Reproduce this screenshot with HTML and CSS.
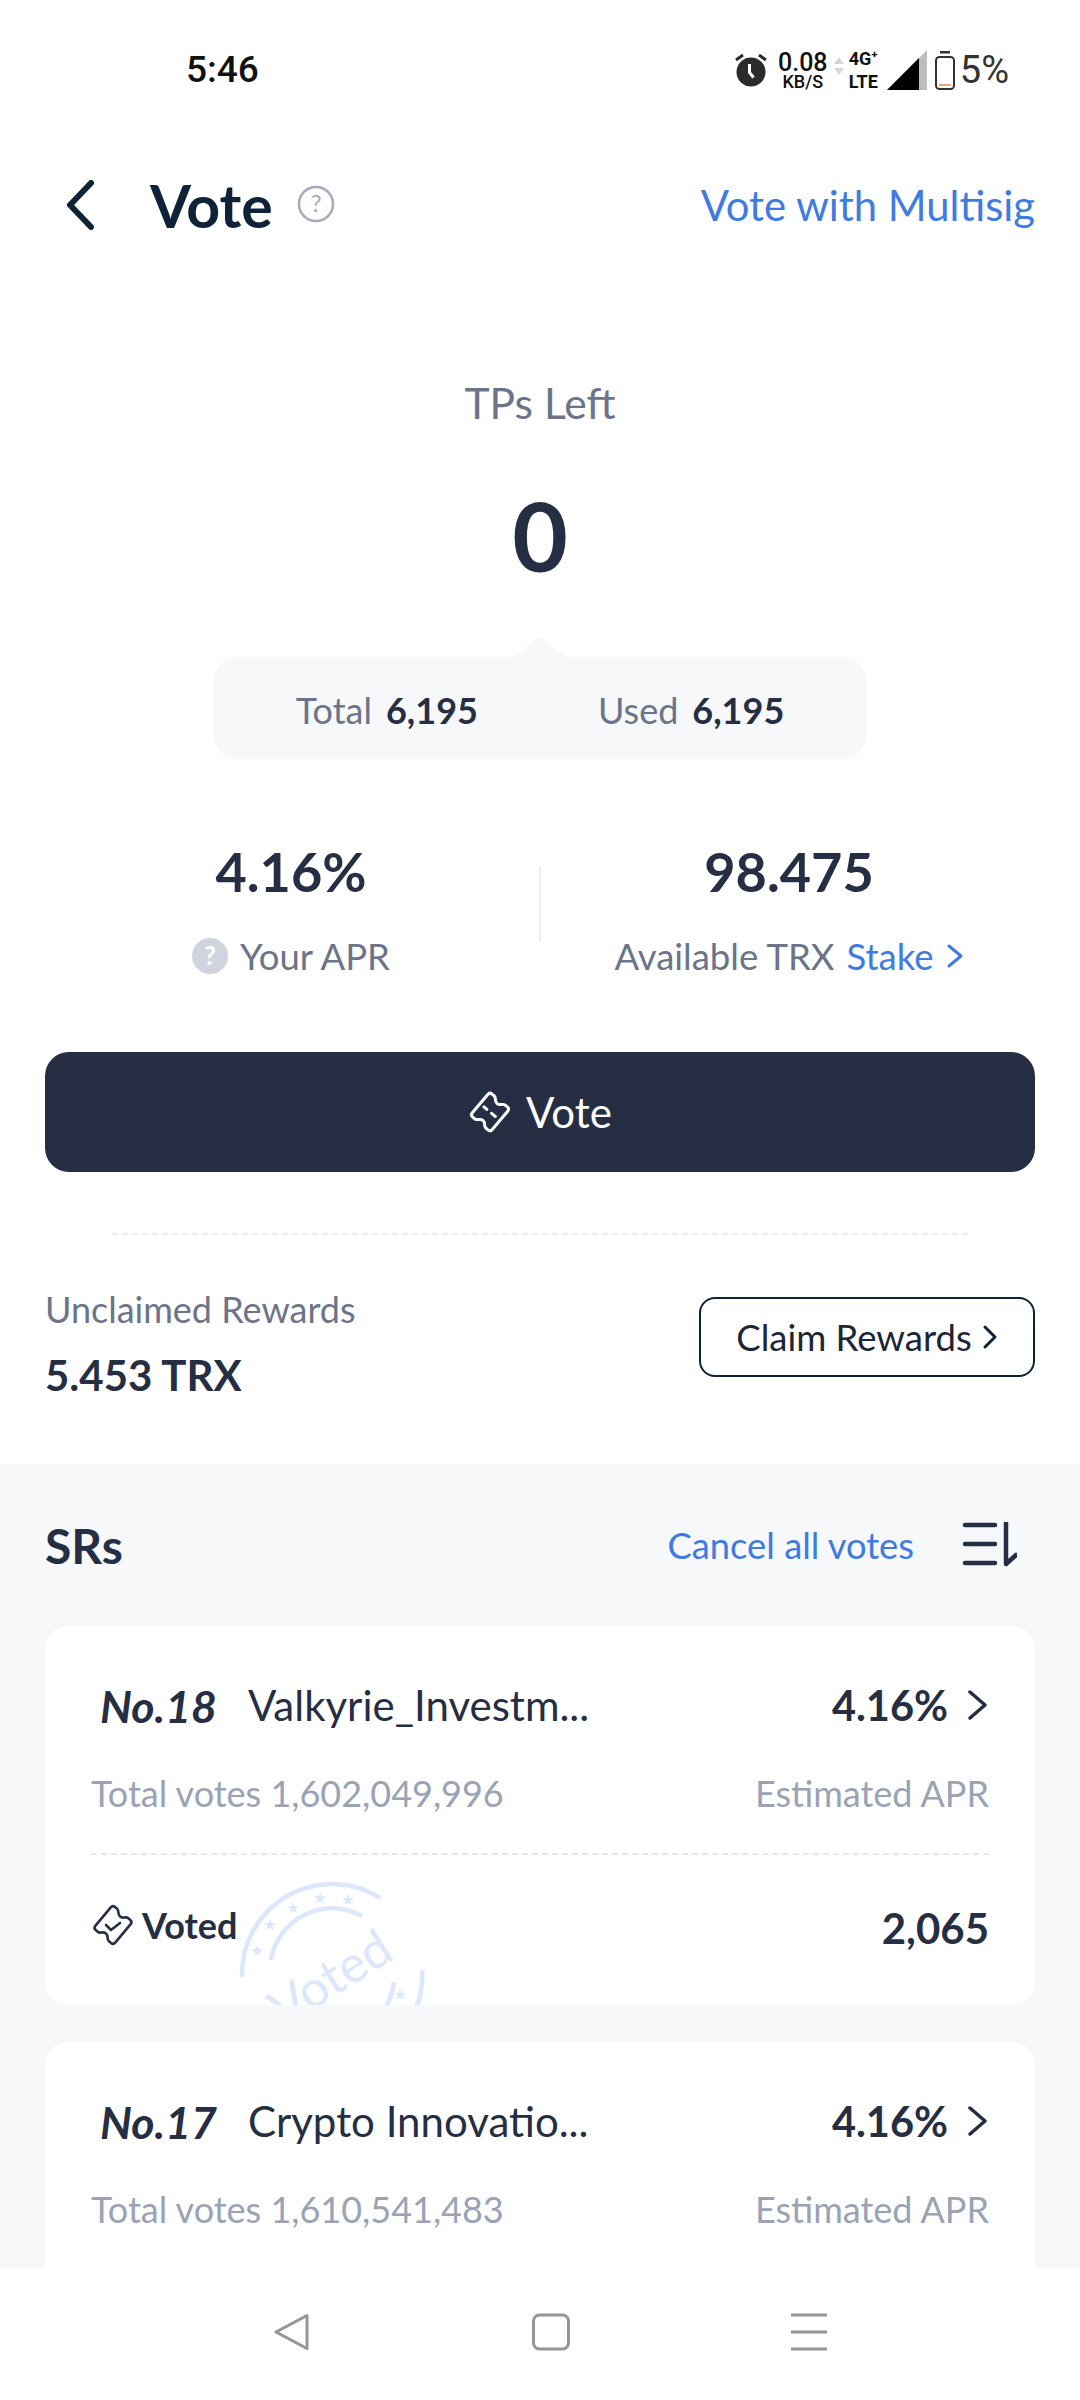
FILE: index.html
```html
<!DOCTYPE html>
<html>
<head>
    <title>Vote</title>
    <link rel="stylesheet" href="styles.css">
</head>

<body>
<div class="phone">
    <div class="status-bar">
        <span class="clock">5:46</span>
        <div class="status-icons">
            <svg class="alarm" width="34" height="36" viewBox="0 0 34 36">
                <circle cx="17" cy="20" r="14.5" fill="#2b2b2b"/>
                <path d="M15.5 12v8.5l4 5" fill="none" stroke="#fff" stroke-width="3"/>
                <path d="M2 8l7-5M32 8l-7-5" stroke="#2b2b2b" stroke-width="3" fill="none"/>
            </svg>
            <div class="speed"><span class="speed-num">0.08</span><span class="speed-unit">KB/S</span></div>
            <svg class="updown" width="10" height="18" viewBox="0 0 10 18">
                <path d="M5 0l5 7H0z" fill="#d6d6d6"/>
                <path d="M5 18l5-7H0z" fill="#d6d6d6"/>
            </svg>
            <div class="network"><span>4G<sup>+</sup></span><span>LTE</span></div>
            <svg class="signal" width="40" height="40" viewBox="0 0 40 40">
                <path d="M0 40L40 0v40z" fill="#bdbdbd"/>
                <path d="M0 40L32 8v32z" fill="#000"/>
            </svg>
            <svg class="battery" width="20" height="39" viewBox="0 0 20 39">
                <rect x="5" y="0" width="10" height="2.5" fill="#333"/>
                <rect x="1" y="6" width="18" height="32" rx="3.5" fill="none" stroke="#333" stroke-width="2"/>
                <rect x="4" y="33" width="12" height="2" fill="#f0a283"/>
            </svg>
            <span class="battery-num">5%</span>
        </div>
    </div>

    <div class="scroll">
        <div class="top-bar">
            <svg class="back" width="30" height="50" viewBox="0 0 30 50">
                <path d="M26 3L5 25l21 22" fill="none" stroke="#0e2238" stroke-width="6" stroke-linecap="round" stroke-linejoin="round"/>
            </svg>
            <h1 class="title">Vote</h1>
            <svg class="help" width="38" height="38" viewBox="0 0 38 38">
                <circle cx="19" cy="19" r="17" fill="none" stroke="#a3abbb" stroke-width="2.5"/>
                <text x="19" y="27" text-anchor="middle" class="help-mark">?</text>
            </svg>
            <a class="multisig">Vote with Multisig</a>
        </div>

        <div class="tps">
            <div class="tps-label">TPs Left</div>
            <div class="tps-value">0</div>
            <div class="tps-box">
                <svg class="notch" width="78" height="22" viewBox="0 0 78 22">
                    <path d="M0 22c12 0 17-3 24-10 5-6 9-10 15-10s10 4 15 10c7 7 12 10 24 10z" fill="#f6f8fa"/>
                </svg>
                <span><span class="muted">Total</span><b>6,195</b></span>
                <span><span class="muted">Used</span><b>6,195</b></span>
            </div>
        </div>

        <div class="stats">
            <div class="stat">
                <div class="stat-value">4.16%</div>
                <div class="stat-label">
                    <svg width="36" height="36" viewBox="0 0 36 36">
                        <circle cx="18" cy="18" r="18" fill="#cfd4de"/>
                        <text x="18" y="27" text-anchor="middle" class="apr-mark">?</text>
                    </svg>
                    <span class="muted">Your APR</span>
                </div>
            </div>
            <div class="stat-line"></div>
            <div class="stat">
                <div class="stat-value">98.475</div>
                <div class="stat-label">
                    <span class="muted">Available TRX</span>
                    <a class="link">Stake</a>
                    <svg width="18" height="26" viewBox="0 0 18 26">
                        <path d="M3 3l12 10L3 23" fill="none" stroke="#3f7be0" stroke-width="3" stroke-linecap="round" stroke-linejoin="round"/>
                    </svg>
                </div>
            </div>
        </div>

        <button class="vote-btn">
            <svg width="44" height="44" viewBox="-22 -22 44 44">
                <path transform="rotate(-50)" d="M-12-13H12Q15-13 15-10V-7C15-4 11-4 11 0S15 4 15 7V10Q15 13 12 13H-12Q-15 13-15 10V7C-15 4-11 4-11 0S-15-4-15-7V-10Q-15-13-12-13Z" fill="none" stroke="#fff" stroke-width="3" stroke-linejoin="round"/>
                <path transform="rotate(-50)" d="M0-8V-4M0 2V7" fill="none" stroke="#fff" stroke-width="3" stroke-linecap="round"/>
            </svg>
            <span>Vote</span>
        </button>

        <div class="dash-line"></div>

        <div class="rewards">
            <div>
                <div class="muted rewards-label">Unclaimed Rewards</div>
                <div class="rewards-value">5.453 TRX</div>
            </div>
            <button class="claim-btn">
                <span>Claim Rewards</span>
                <svg width="16" height="26" viewBox="0 0 16 26">
                    <path d="M3 3l10 10L3 23" fill="none" stroke="#0e2238" stroke-width="3" stroke-linecap="round" stroke-linejoin="round"/>
                </svg>
            </button>
        </div>

        <div class="sr-section">
            <div class="sr-head">
                <h2 class="sr-title">SRs</h2>
                <a class="link cancel">Cancel all votes</a>
                <svg class="sort" width="56" height="46" viewBox="0 0 56 46">
                    <path d="M4 3h30M4 22h30M4 41h30" stroke="#252e43" stroke-width="4.5" stroke-linecap="round" fill="none"/>
                    <path d="M45 1v41l10-9" stroke="#252e43" stroke-width="4.5" stroke-linecap="round" stroke-linejoin="round" fill="none"/>
                </svg>
            </div>

            <div class="card">
                <div class="card-row">
                    <span class="rank">No.18</span>
                    <span class="sr-name">Valkyrie_Investm...</span>
                    <span class="apr">4.16%</span>
                    <svg class="chev" width="20" height="30" viewBox="0 0 20 30">
                        <path d="M2 2l15 13L2 28" fill="none" stroke="#252e43" stroke-width="3.5" stroke-linecap="round" stroke-linejoin="round"/>
                    </svg>
                </div>
                <div class="card-sub">
                    <span>Total votes 1,602,049,996</span>
                    <span>Estimated APR</span>
                </div>
                <div class="card-dash"></div>
                <div class="voted-row">
                    <svg class="voted-icon" width="44" height="44" viewBox="-22 -22 44 44">
                        <path transform="rotate(-50)" d="M-12-13H12Q15-13 15-10V-7C15-4 11-4 11 0S15 4 15 7V10Q15 13 12 13H-12Q-15 13-15 10V7C-15 4-11 4-11 0S-15-4-15-7V-10Q-15-13-12-13Z" fill="none" stroke="#252e43" stroke-width="2.6" stroke-linejoin="round"/>
                        <path d="M-7 0l5 5 9-7" fill="none" stroke="#252e43" stroke-width="2.6" stroke-linecap="round" stroke-linejoin="round"/>
                    </svg>
                    <b class="voted">Voted</b>
                    <b class="voted-num">2,065</b>
                </div>
                <svg class="stamp" width="190" height="125" viewBox="0 0 190 125">
                    <g fill="none" stroke="#dce7fb" stroke-width="4.5">
                        <path d="M5 97A90 90 0 0 1 143 18"/>
                        <path d="M185 90A90 90 0 0 1 176 135"/>
                        <path d="M34 80A62 62 0 0 1 125 36"/>
                        <path d="M157 102A62 62 0 0 1 148 128"/>
                    </g>
                    <g fill="#dce7fb" font-size="15" text-anchor="middle" class="stamp-stars">
                        <text x="20" y="76">★</text>
                        <text x="33" y="50">★</text>
                        <text x="56" y="33">★</text>
                        <text x="83" y="23">★</text>
                        <text x="111" y="25">★</text>
                        <text x="163" y="120">★</text>
                    </g>
                    <text class="stamp-text" x="103" y="113" text-anchor="middle" transform="rotate(-32 103 113)">Voted</text>
                </svg>
            </div>

            <div class="card">
                <div class="card-row">
                    <span class="rank">No.17</span>
                    <span class="sr-name">Crypto Innovatio...</span>
                    <span class="apr">4.16%</span>
                    <svg class="chev" width="20" height="30" viewBox="0 0 20 30">
                        <path d="M2 2l15 13L2 28" fill="none" stroke="#252e43" stroke-width="3.5" stroke-linecap="round" stroke-linejoin="round"/>
                    </svg>
                </div>
                <div class="card-sub">
                    <span>Total votes 1,610,541,483</span>
                    <span>Estimated APR</span>
                </div>
            </div>
        </div>
    </div>

    <div class="nav-bar">
        <svg width="38" height="38" viewBox="0 0 38 38">
            <path d="M33 2.5v33L2 19z" fill="none" stroke="#969696" stroke-width="3" stroke-linejoin="round"/>
        </svg>
        <svg width="38" height="38" viewBox="0 0 38 38">
            <rect x="1.5" y="2" width="35" height="34" rx="6" fill="none" stroke="#969696" stroke-width="3"/>
        </svg>
        <svg width="38" height="38" viewBox="0 0 38 38">
            <path d="M1 2h36M1 19h36M1 36h36" stroke="#969696" stroke-width="3" fill="none"/>
        </svg>
    </div>
</div>
</body>
</html>
```

FILE: styles.css
```css
* {
    box-sizing: border-box;
}

body {
    margin: 0;
    background-color: #fff;
    font-family: 'Lato', sans-serif;
    color: #252e43;
}

.phone {
    width: 1080px;
    height: 2400px;
    display: flex;
    flex-direction: column;
    overflow: hidden;
}

/* status bar */
.status-bar {
    height: 170px;
    flex: none;
    display: flex;
    justify-content: space-between;
    align-items: flex-start;
    padding: 50px 71px 0 186px;
    font-family: 'Roboto', sans-serif;
    color: #111;
}

.clock {
    font-size: 37px;
    line-height: 40px;
    font-weight: 500;
}

.status-icons {
    display: flex;
    align-items: center;
    height: 40px;
}

.alarm {
    margin-right: 8px;
}

.speed {
    display: flex;
    flex-direction: column;
    align-items: center;
    width: 54px;
    font-weight: 500;
}

.speed-num {
    font-size: 25px;
    line-height: 23px;
}

.speed-unit {
    font-size: 18px;
    line-height: 16px;
}

.updown {
    margin: 0 5px 8px 4px;
}

.network {
    display: flex;
    flex-direction: column;
    width: 32px;
    margin-right: 6px;
    font-size: 18px;
    line-height: 23px;
    font-weight: 700;
}

.network sup {
    font-size: 11px;
    line-height: 0;
}

.signal {
    margin-right: 8px;
}

.battery {
    margin-right: 5px;
}

.battery-num {
    font-size: 38px;
    color: #333;
}

/* header */
.scroll {
    flex: 1;
    min-height: 0;
    overflow: hidden;
}

.top-bar {
    display: flex;
    align-items: center;
    height: 70px;
    padding: 0 45px 0 65px;
}

.back {
    margin-right: 55px;
}

.title {
    margin: 0 24px 0 0;
    font-size: 59px;
    font-weight: 700;
    color: #0e2238;
}

.help {
    margin-bottom: 2px;
}

.multisig {
    margin-left: auto;
    font-size: 41.8px;
    color: #3f7be0;
}

.help-mark {
    font-family: 'Lato', sans-serif;
    font-size: 24px;
    fill: #a3abbb;
}

.apr-mark {
    font-family: 'Lato', sans-serif;
    font-size: 26px;
    font-weight: 700;
    fill: #fff;
}

.muted {
    color: #6b7488;
}

.link {
    color: #3f7be0;
}

/* TPs */
.tps {
    display: flex;
    flex-direction: column;
    align-items: center;
    margin-top: 138px;
}

.tps-label {
    font-size: 42.5px;
    line-height: 50px;
    color: #6b7488;
}

.tps-value {
    margin-top: 52px;
    font-size: 96px;
    line-height: 110px;
    font-weight: 700;
}

.tps-box {
    position: relative;
    display: flex;
    justify-content: center;
    align-items: center;
    gap: 120px;
    width: 654px;
    height: 102px;
    margin-top: 67px;
    padding-top: 3px;
    border-radius: 24px;
    background-color: #f6f8fa;
    font-size: 36px;
}

.tps-box b {
    margin-left: 14px;
}

.notch {
    position: absolute;
    top: -21px;
    left: 288px;
}

/* stats */
.stats {
    display: grid;
    grid-template-columns: 1fr 2px 1fr;
    margin-top: 78px;
    padding: 0 43px;
}

.stat {
    display: flex;
    flex-direction: column;
    align-items: center;
}

.stat-value {
    font-size: 54px;
    line-height: 70px;
    font-weight: 700;
}

.stat-label {
    display: flex;
    align-items: center;
    gap: 12px;
    margin-top: 24px;
    font-size: 36.5px;
    line-height: 50px;
}

.stat-line {
    width: 2px;
    height: 76px;
    margin-top: 29px;
    background-color: #edf1f7;
}

/* button */
.vote-btn {
    display: flex;
    justify-content: center;
    align-items: center;
    gap: 14px;
    width: 990px;
    height: 120px;
    margin: 71px 45px 0;
    border: none;
    border-radius: 24px;
    background-color: #252e43;
    color: #fff;
    font-family: inherit;
    font-size: 42px;
}

.dash-line {
    margin: 61px 112px 0;
    border-top: 2px dashed #eceef2;
}

.rewards {
    display: flex;
    justify-content: space-between;
    align-items: center;
    margin-top: 49px;
    padding: 0 45px;
}

.rewards-label {
    font-size: 36px;
    line-height: 50px;
}

.rewards-value {
    margin-top: 16px;
    font-size: 42px;
    line-height: 50px;
    font-weight: 700;
}

.claim-btn {
    display: flex;
    align-items: center;
    justify-content: center;
    gap: 10px;
    width: 336px;
    height: 80px;
    margin-bottom: 10px;
    border: 2.5px solid #0e2238;
    border-radius: 16px;
    background-color: #fff;
    color: #1b2638;
    font-family: inherit;
    font-size: 36.5px;
}

/* SR list */
.sr-section {
    margin-top: 64px;
    padding: 0 45px;
    background-color: #f6f8fa;
    height: 1000px;
}

.sr-head {
    display: flex;
    align-items: center;
    height: 162px;
}

.sr-title {
    margin: 0;
    font-size: 48px;
    font-weight: 700;
}

.cancel {
    margin-left: auto;
    margin-right: 47px;
    font-size: 36.3px;
}

.sort {
    margin-right: 18px;
}

.card {
    position: relative;
    height: 379px;
    margin-bottom: 37px;
    padding: 49px 46px 0;
    border-radius: 24px;
    background-color: #fff;
    overflow: hidden;
}

.card-row {
    display: flex;
    align-items: center;
    height: 60px;
}

.rank {
    width: 157px;
    padding-left: 9px;
    font-size: 44.5px;
    font-weight: 700;
    font-style: italic;
}

.sr-name {
    font-size: 42px;
}

.apr {
    margin-left: auto;
    font-size: 41.5px;
    font-weight: 700;
}

.chev {
    margin-left: 20px;
    margin-right: 1px;
}

.card-sub {
    display: flex;
    justify-content: space-between;
    margin-top: 36px;
    font-size: 36px;
    line-height: 44px;
    color: #9aa3b5;
}

.card-dash {
    margin-top: 38px;
    border-top: 2px dashed #e3e6ec;
}

.voted-row {
    display: flex;
    align-items: center;
    height: 70px;
    margin-top: 38px;
}

.voted-icon {
    margin-bottom: 6px;
}

.voted {
    margin-left: 7px;
    margin-bottom: 6px;
    font-size: 36px;
}

.voted-num {
    margin-left: auto;
    font-size: 42px;
}

.stamp {
    position: absolute;
    left: 192px;
    top: 254px;
}

.stamp-stars {
    font-family: 'DejaVu Sans', sans-serif;
}

.stamp-text {
    font-family: 'Lato', sans-serif;
    font-size: 51px;
    fill: #dce7fb;
}

/* nav */
.nav-bar {
    flex: none;
    display: flex;
    justify-content: center;
    align-items: center;
    gap: 220px;
    height: 132px;
    padding: 0 0 5px 21px;
    background-color: #fff;
}
```
